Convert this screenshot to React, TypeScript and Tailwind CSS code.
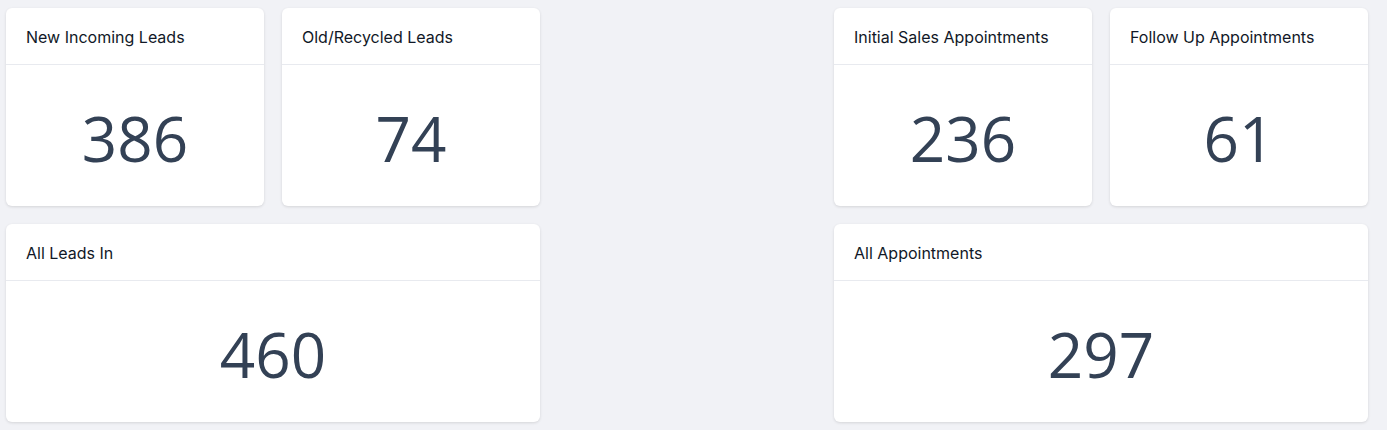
const cards = [
  { title: 'New Incoming Leads', value: 386, span: 'col-start-1' },
  { title: 'Old/Recycled Leads', value: 74, span: 'col-start-2' },
  { title: 'Initial Sales Appointments', value: 236, span: 'col-start-4' },
  { title: 'Follow Up Appointments', value: 61, span: 'col-start-5' },
  { title: 'All Leads In', value: 460, span: 'col-start-1 col-span-2' },
  { title: 'All Appointments', value: 297, span: 'col-start-4 col-span-2' }
]

const StatCard = ({ title, value, span }: { title: string; value: number; span: string }) => {
  return (
    <div
      className={`${span} h-[198px] flex flex-col rounded-md bg-white shadow-[0_1px_3px_rgba(0,0,0,0.12)]`}
    >
      <div className="h-[57px] shrink-0 flex items-center px-5 pt-[2px] border-b border-[#e8eaef]">
        <h3 className="text-[16px] text-[#111827] font-[Inter,sans-serif]">{title}</h3>
      </div>
      <div className="flex-1 flex items-center justify-center pt-1">
        <span className="text-[62px] leading-none text-[#334155] font-['Open_Sans',sans-serif]">
          {value}
        </span>
      </div>
    </div>
  )
}

export default function App() {
  return (
    <div className="min-h-[430px] w-full bg-[#f1f2f6] pl-[6px] pr-[19px] pt-[8px]">
      <div className="grid grid-cols-5 gap-[18px]">
        {cards.map((card) => (
          <StatCard key={card.title} {...card} />
        ))}
      </div>
    </div>
  )
}
